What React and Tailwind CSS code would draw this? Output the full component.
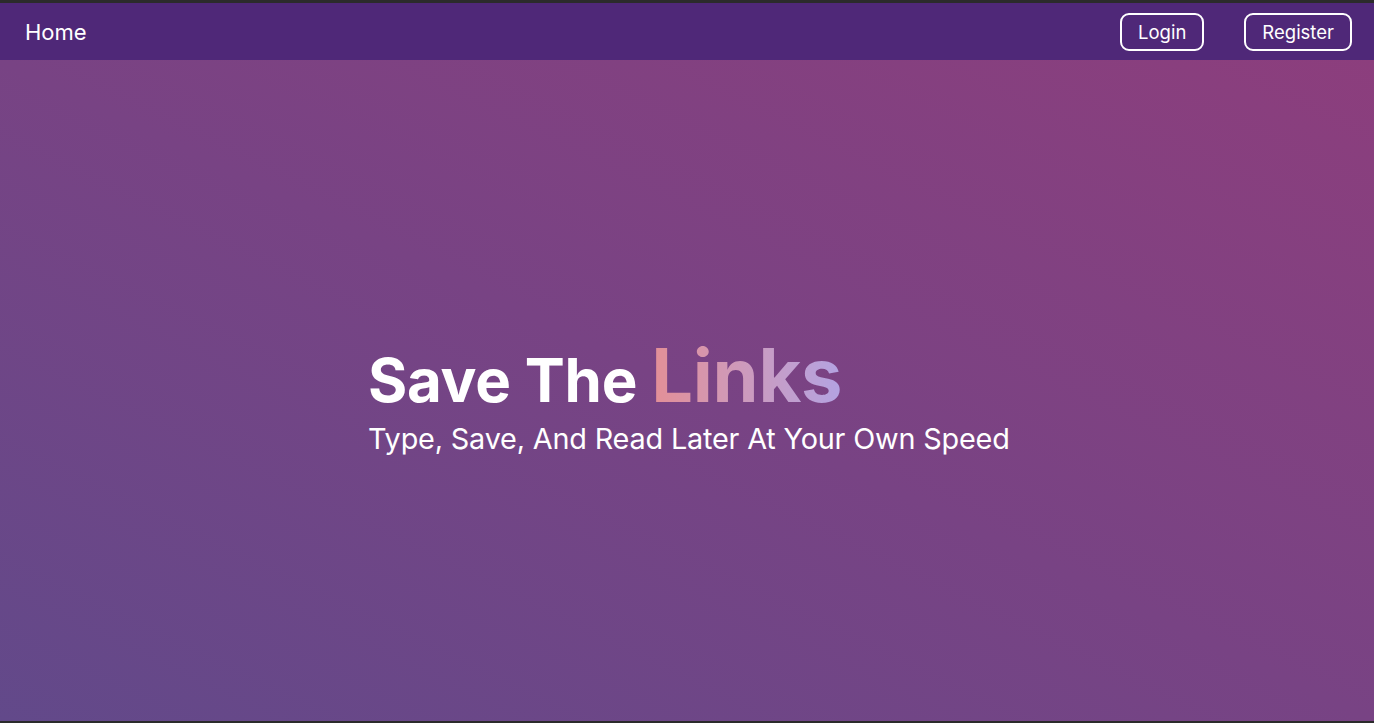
export default function App() {
  return (
    <div className="h-[723px] w-full flex flex-col bg-[#2b2b2b] pt-[3px] overflow-hidden font-['Inter',sans-serif] text-white">
      <nav className="h-[57px] shrink-0 bg-[#4f2878] flex items-center justify-between pl-[25px] pr-[22px]">
        <a href="#" className="text-[22px] leading-none">Home</a>
        <div className="flex items-center gap-[40px]">
          <button className="h-[38px] px-[16px] pt-[2px] border-2 border-white rounded-[9px] text-[18.5px] leading-none">Login</button>
          <button className="h-[38px] px-[16px] pt-[2px] border-2 border-white rounded-[9px] text-[18.5px] leading-none">Register</button>
        </div>
      </nav>
      <main className="flex-1 mb-[2px] bg-gradient-to-tr from-[#62498a] via-[#784384] to-[#8c3e7d] flex items-center pl-[368px] pt-[10px]">
        <div className="flex flex-col">
          <h1 className="flex items-baseline font-bold leading-none tracking-[-0.015em]">
            <span className="text-[60px]">Save The</span>
            <span className="ml-[14px] text-[74px] bg-gradient-to-r from-[#e38f96] to-[#b3a3e2] bg-clip-text text-transparent">Links</span>
          </h1>
          <p className="mt-[13px] text-[28.8px] leading-none tracking-[-0.006em]">Type, Save, And Read Later At Your Own Speed</p>
        </div>
      </main>
    </div>
  );
}
